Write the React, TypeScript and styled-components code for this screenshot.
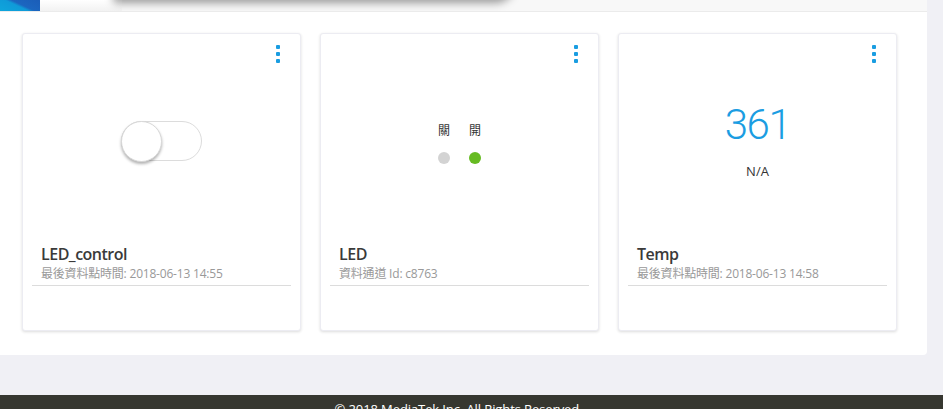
import React from "react";
import styled, { createGlobalStyle } from "styled-components";

const GlobalStyle = createGlobalStyle`
  html, body {
    margin: 0;
    padding: 0;
    overflow: hidden;
    background: #f0f0f5;
    font-family: "Open Sans", "Noto Sans CJK TC", sans-serif;
  }
`;

const Page = styled.div`
  display: flex;
  flex-direction: column;
  min-height: 409px;
`;

const Panel = styled.div`
  width: 927px;
  background: #ffffff;
  border-bottom-right-radius: 4px;
`;

const TopStrip = styled.div`
  position: relative;
  display: flex;
  height: 11px;
  background: #f8f8f8;
  border-bottom: 1px solid #ebebeb;
  overflow: hidden;
`;

const Logo = styled.div`
  width: 40px;
  height: 11px;
  background: linear-gradient(25deg, #0fa6dc 0%, #0f9ad8 45%, #1c66c0 55%, #1b5db8 100%);
`;

const HeaderTab = styled.div`
  width: 82px;
  height: 11px;
  background: linear-gradient(#ffffff, #f2f2f2);
`;

const DropShadow = styled.div`
  position: absolute;
  left: 113px;
  top: -30px;
  width: 402px;
  height: 30px;
  background: #fff;
  border-radius: 0 0 20px 4px;
  box-shadow: 0 3px 9px rgba(0, 0, 0, 0.38);
`;

const CardRow = styled.div`
  display: flex;
  gap: 19px;
  padding: 21px 0 24px 22px;
`;

const Card = styled.div`
  width: 277px;
  height: 296px;
  display: flex;
  flex-direction: column;
  background: #fff;
  border: 1px solid #ececf2;
  border-radius: 3px;
  box-shadow: 0 1px 3px rgba(0, 0, 0, 0.14);
`;

const KebabRow = styled.div`
  display: flex;
  justify-content: flex-end;
  height: 31px;
  box-sizing: border-box;
  padding: 11px 20px 0 0;
`;

const Kebab = styled.div`
  display: flex;
  flex-direction: column;
  gap: 3px;
  cursor: pointer;
`;

const KebabDot = styled.span`
  width: 4px;
  height: 4px;
  border-radius: 1px;
  background: #1a9de1;
`;

const Visual = styled.div<{ $offset: number }>`
  height: 179px;
  box-sizing: border-box;
  padding-top: ${(p) => p.$offset}px;
  display: flex;
  flex-direction: column;
  align-items: center;
`;

const Track = styled.div`
  position: relative;
  width: 79px;
  height: 38px;
  border: 1px solid #dcdcdc;
  border-radius: 20px;
  background: #fff;
  display: flex;
  align-items: center;
`;

const Knob = styled.div`
  width: 41px;
  height: 41px;
  margin-left: -1px;
  border-radius: 50%;
  background: #fff;
  border: 1px solid #d8d8d8;
  box-sizing: border-box;
  box-shadow: 0 2px 3px rgba(0, 0, 0, 0.3);
`;

const LampGroup = styled.div`
  display: flex;
  gap: 19px;
`;

const Lamp = styled.div`
  display: flex;
  flex-direction: column;
  align-items: center;
  gap: 13px;
  width: 12px;
`;

const LampLabel = styled.span`
  font-size: 12px;
  line-height: 17px;
  color: #333;
`;

const LampDot = styled.span<{ $color: string }>`
  width: 12px;
  height: 12px;
  border-radius: 50%;
  background: ${(p) => p.$color};
`;

const BigValue = styled.div`
  font-family: Roboto, "Open Sans", sans-serif;
  font-weight: 300;
  font-size: 42px;
  line-height: 50px;
  letter-spacing: -1.5px;
  color: #1b9de2;
`;

const Unit = styled.div`
  margin-top: 12px;
  font-size: 13px;
  line-height: 18px;
  color: #333;
`;

const Info = styled.div`
  margin: 0 9px;
  padding: 0 0 3px 9px;
  border-bottom: 1px solid #dcdcdc;
`;

const Title = styled.div`
  font-size: 16px;
  line-height: 21px;
  font-weight: 600;
  color: #3a3a3a;
  letter-spacing: -0.5px;
`;

const Sub = styled.div`
  margin-top: 1px;
  font-size: 12px;
  line-height: 16px;
  color: #999;
  letter-spacing: -0.2px;
`;

const Footer = styled.div`
  margin-top: 40px;
  background: #363730;
  color: #fff;
  height: 40px;
  padding-top: 5px;
  box-sizing: border-box;
  text-align: center;
  font-size: 13px;
  line-height: 18px;
  letter-spacing: -0.1px;
  padding-right: 26px;
`;

const KebabMenu = () => (
  <KebabRow>
    <Kebab>
      <KebabDot />
      <KebabDot />
      <KebabDot />
    </Kebab>
  </KebabRow>
);

export default function App() {
  return (
    <Page>
      <GlobalStyle />
      <Panel>
        <TopStrip>
          <Logo />
          <HeaderTab />
          <DropShadow />
        </TopStrip>
        <CardRow>
          <Card>
            <KebabMenu />
            <Visual $offset={56}>
              <Track>
                <Knob />
              </Track>
            </Visual>
            <Info>
              <Title>LED_control</Title>
              <Sub>最後資料點時間: 2018-06-13 14:55</Sub>
            </Info>
          </Card>
          <Card>
            <KebabMenu />
            <Visual $offset={57}>
              <LampGroup>
                <Lamp>
                  <LampLabel>關</LampLabel>
                  <LampDot $color="#d3d3d3" />
                </Lamp>
                <Lamp>
                  <LampLabel>開</LampLabel>
                  <LampDot $color="#66bb22" />
                </Lamp>
              </LampGroup>
            </Visual>
            <Info>
              <Title>LED</Title>
              <Sub>資料通道 Id: c8763</Sub>
            </Info>
          </Card>
          <Card>
            <KebabMenu />
            <Visual $offset={35}>
              <BigValue>361</BigValue>
              <Unit>N/A</Unit>
            </Visual>
            <Info>
              <Title>Temp</Title>
              <Sub>最後資料點時間: 2018-06-13 14:58</Sub>
            </Info>
          </Card>
        </CardRow>
      </Panel>
      <Footer>© 2018 MediaTek Inc. All Rights Reserved.</Footer>
    </Page>
  );
}
